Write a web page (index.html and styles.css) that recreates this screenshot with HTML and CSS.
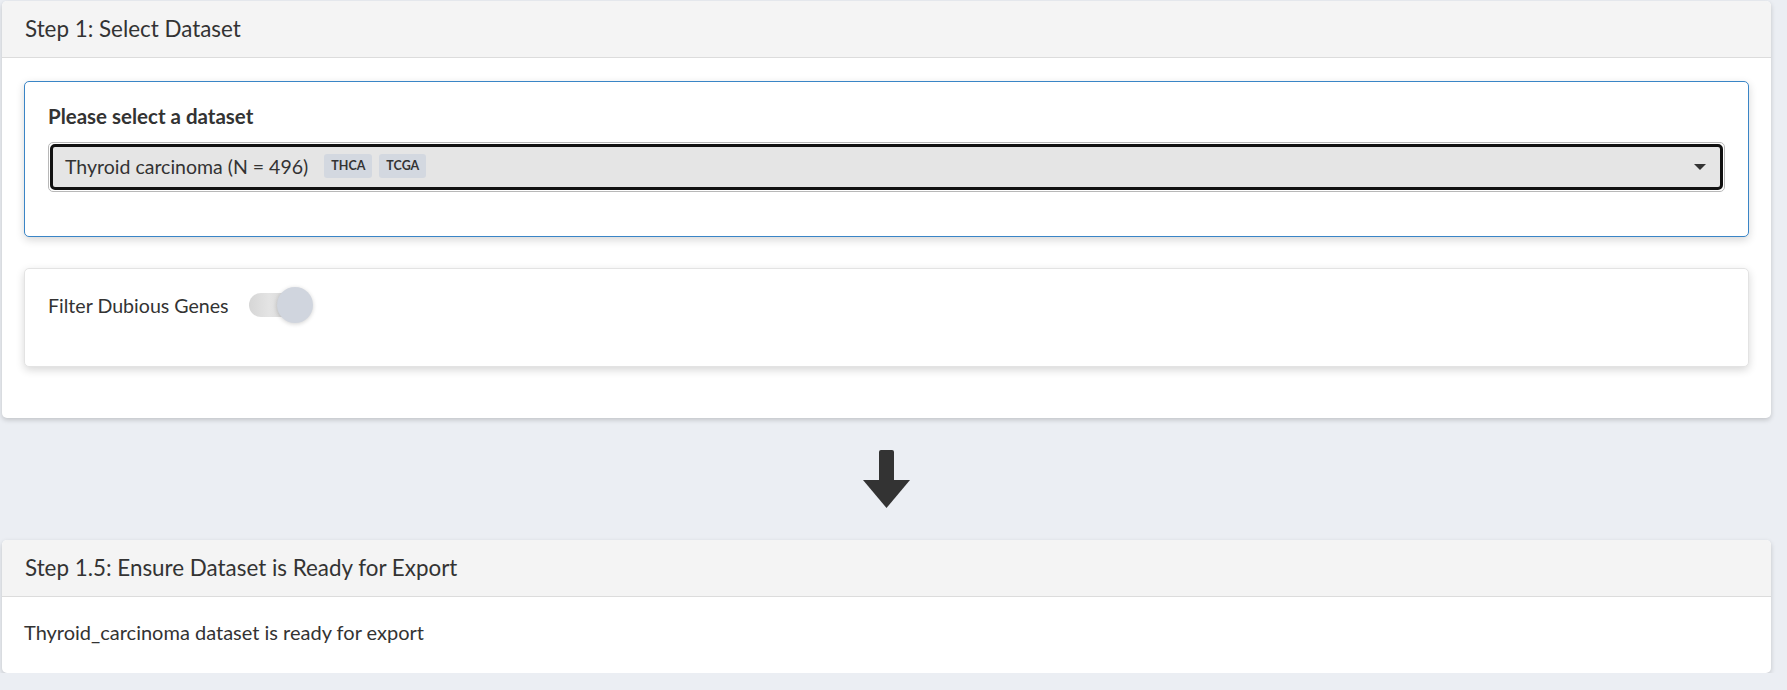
FILE: index.html
```html
<!DOCTYPE html>
<html lang="en">
<head>
    <meta charset="UTF-8">
    <title>Export Dataset</title>
    <link rel="stylesheet" href="styles.css">
</head>
<body>
    <div class="box">
        <div class="box-header">Step 1: Select Dataset</div>
        <div class="box-body">
            <div class="well well-active">
                <label class="field-label">Please select a dataset</label>
                <div class="select-wrap">
                    <div class="select">
                        <span class="select-text">Thyroid carcinoma (N = 496)</span>
                        <span class="tag">THCA</span>
                        <span class="tag">TCGA</span>
                        <span class="caret"></span>
                    </div>
                </div>
            </div>

            <div class="well well-plain">
                <div class="switch-row">
                    <span>Filter Dubious Genes</span>
                    <span class="switch"><span class="knob"></span></span>
                </div>
            </div>
        </div>
    </div>

    <div class="arrow">
        <svg width="47" height="58" viewBox="0 0 47 58">
            <rect x="16" y="0" width="15" height="32" rx="2" fill="#333"/>
            <polygon points="0,30 47,30 23.5,58" fill="#333"/>
        </svg>
    </div>

    <div class="box">
        <div class="box-header">Step 1.5: Ensure Dataset is Ready for Export</div>
        <div class="box-body box-body-text">
            Thyroid_carcinoma dataset is ready for export
        </div>
    </div>
</body>
</html>
```

FILE: styles.css
```css
body {
    margin: 0;
    padding: 1px 16px 0 2px;
    background-color: #ebeef3;
    font-family: 'Lato', 'Open Sans', sans-serif;
    color: #333;
}

.box {
    background: #fff;
    border-radius: 5px;
    box-shadow: 0 2px 5px rgba(0, 0, 0, 0.18);
    overflow: hidden;
}

.box-header {
    height: 56px;
    line-height: 55px;
    padding: 0 23px;
    background: #f4f4f4;
    border-bottom: 1px solid #dcdcdc;
    font-size: 22.4px;
}

.box-body {
    padding: 23px 22px 51px 22px;
}

.box-body-text {
    padding: 19px 22px 25px 22px;
    font-size: 20px;
    line-height: 32px;
}

.well {
    background: #fff;
    border-radius: 5px;
    box-shadow: 0 3px 8px rgba(0, 0, 0, 0.16);
}

.well-active {
    border: 1px solid #3a85c6;
    padding: 22px 23px 44px 23px;
    margin-bottom: 31px;
}

.well-plain {
    border: 1px solid #e3e3e3;
    padding: 18px 23px 43px 23px;
}

.field-label {
    display: block;
    font-weight: bold;
    font-size: 20.5px;
    line-height: 24px;
    margin-bottom: 14px;
}

.select-wrap {
    border: 1px solid #b8b8b8;
    border-radius: 5px;
    padding: 1px;
}

.select {
    display: flex;
    align-items: center;
    height: 38px;
    padding: 0 14px 2px 12px;
    border: 3px solid #111;
    border-radius: 5px;
    background: #e5e5e5;
    font-size: 19.5px;
}

.select-text {
    margin-right: 16px;
}

.tag {
    display: inline-block;
    height: 24px;
    line-height: 24px;
    padding: 0 7px;
    margin-right: 7px;
    background: #d3d8e0;
    border-radius: 3px;
    font-size: 12.5px;
    font-weight: bold;
    color: #333;
}

.caret {
    margin-left: auto;
    margin-top: 2px;
    width: 0;
    height: 0;
    border-left: 6px solid transparent;
    border-right: 6px solid transparent;
    border-top: 6px solid #333;
}

.switch-row {
    display: flex;
    align-items: center;
    gap: 20px;
    font-size: 19.6px;
    height: 36px;
}

.switch {
    position: relative;
    display: inline-block;
    width: 50px;
    height: 24px;
    border-radius: 12px;
    background: linear-gradient(90deg, #d6d6d6, #e4e4e4 40%, #cfcfcf);
}

.knob {
    position: absolute;
    right: -14px;
    top: -6px;
    width: 36px;
    height: 36px;
    border-radius: 50%;
    background: #d0d5de;
    box-shadow: 0 1px 4px rgba(0, 0, 0, 0.18);
}

.arrow {
    display: flex;
    justify-content: center;
    padding: 32px 0 32px 0;
}

.arrow svg {
    display: block;
}
```
